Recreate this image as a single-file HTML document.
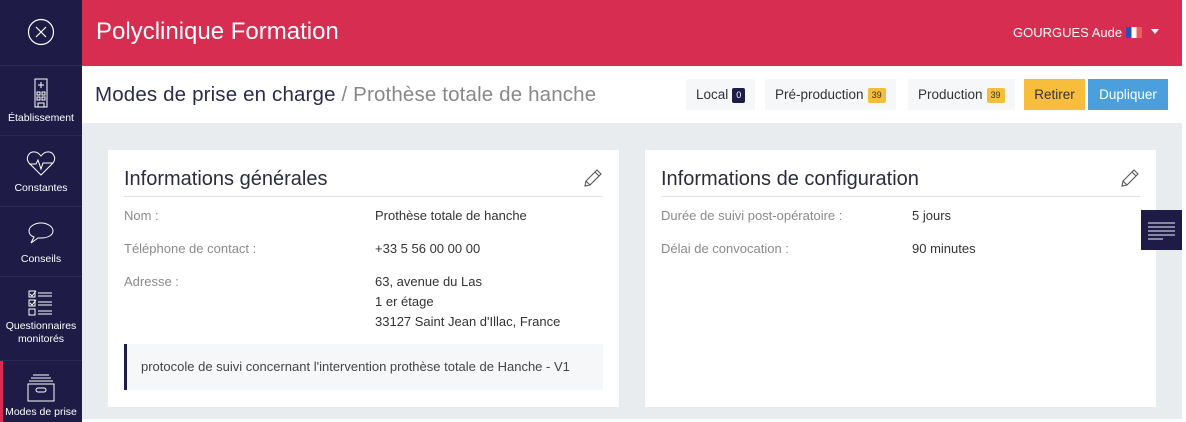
<!DOCTYPE html>
<html><head><meta charset="utf-8"><style>
*{box-sizing:border-box;margin:0;padding:0}
body{width:1186px;height:422px;overflow:hidden;background:#fff;font-family:"Liberation Sans",sans-serif;position:relative}
.side{position:absolute;left:0;top:0;width:82px;height:422px;background:#1e1b46}
.si{position:absolute;left:0;width:82px;border-bottom:1px solid #2e2b5a;color:#fff;font-size:10.5px;text-align:center}
.si svg{display:block;margin:0 auto}
.hdr{position:absolute;left:82px;top:0;width:1100px;height:66px;background:#d62d50;color:#fff}
.sub{position:absolute;left:82px;top:66px;width:1100px;height:57px;background:#fff}
.main{position:absolute;left:82px;top:123px;width:1100px;height:296px;background:#e9ecef}
.card{position:absolute;top:27px;width:511px;height:257px;background:#fff}
.ct{position:absolute;left:16px;top:16px;right:16px;height:31px;border-bottom:1px solid #e3e3e3;font-size:20px;color:#2c2c3c;padding-top:2px}
.lb{position:absolute;font-size:13px;color:#8a8a8a}
.vl{position:absolute;font-size:13px;color:#333;line-height:20px}
.btn{position:absolute;top:79px;height:31px;font-size:13.5px;line-height:31px;padding:0 10px;color:#333;background:#f6f7f9}
.bd{display:inline-block;font-size:9px;line-height:15px;padding:0 4px;border-radius:2px;vertical-align:middle;margin-left:4px}
</style></head><body>
<div class="side">
 <div class="si" style="top:0;height:66px"><svg width="28" height="28" viewBox="0 0 28 28" style="margin-top:18px"><circle cx="14" cy="14" r="12.5" fill="none" stroke="#fff" stroke-width="1.2"/><path d="M9 9L19 19M19 9L9 19" stroke="#fff" stroke-width="1.2"/></svg></div>
 <div class="si" style="top:66px;height:70px"><svg width="16" height="30" viewBox="0 0 16 30" style="margin-top:12px"><rect x="2" y="1" width="12" height="28" fill="none" stroke="#fff"/><path d="M8 4v6M5 7h6M4 14h3v3H4zM9 14h3v3H9zM4 19h3v3H4zM9 19h3v3H9zM5 29v-4h6v4" fill="none" stroke="#fff"/></svg><div style="margin-top:4px">Établissement</div></div>
 <div class="si" style="top:136px;height:71px"><svg width="30" height="26" viewBox="0 0 30 26" style="margin-top:14px"><path d="M15 25L3 13C-1 8 3 1 9 2c3 0 5 3 6 4 1-1 3-4 6-4 6-1 10 6 6 11z" fill="none" stroke="#fff"/><path d="M3 14h7l2-4 3 9 2-6h10" fill="none" stroke="#fff"/></svg><div style="margin-top:6px">Constantes</div></div>
 <div class="si" style="top:207px;height:70px"><svg width="28" height="24" viewBox="0 0 28 24" style="margin-top:14px"><path d="M14 2C7 2 2 6 2 10c0 3 2 5 5 6l-3 6 7-5h3c7 0 12-3 12-7S21 2 14 2z" fill="none" stroke="#fff"/></svg><div style="margin-top:8px">Conseils</div></div>
 <div class="si" style="top:277px;height:84px"><svg width="26" height="26" viewBox="0 0 26 26" style="margin-top:13px"><rect x="1" y="1" width="6" height="6" fill="none" stroke="#fff"/><rect x="1" y="10" width="6" height="6" fill="none" stroke="#fff"/><rect x="1" y="19" width="6" height="6" fill="none" stroke="#fff"/><path d="M2 4l2 2 4-5M2 13l2 2 4-5M10 3h14M10 6h14M10 12h14M10 15h14M10 21h14M10 24h14" fill="none" stroke="#fff"/></svg><div style="margin-top:4px;line-height:13px">Questionnaires<br>monitorés</div></div>
 <div class="si" style="top:361px;height:61px;border-bottom:none"><div style="position:absolute;left:0;top:0;width:3px;height:61px;background:#d62d50"></div><svg width="30" height="28" viewBox="0 0 30 28" style="margin-top:13px"><path d="M7 1h16M5 4h20M3 7h24" stroke="#fff" fill="none"/><rect x="2" y="10" width="26" height="17" fill="none" stroke="#fff"/><rect x="10" y="14" width="10" height="4" rx="2" fill="none" stroke="#fff"/></svg><div style="margin-top:4px">Modes de prise</div></div>
</div>
<div class="hdr"><div style="position:absolute;left:14px;top:18px;font-size:24px">Polyclinique Formation</div>
<div style="position:absolute;left:931px;top:25px;font-size:13px">GOURGUES Aude <span style="display:inline-block;width:16px;height:11px;vertical-align:-1px;background:linear-gradient(90deg,#2b4fb0 33%,#fff 33% 66%,#ef5b5b 66%)"></span> <span style="display:inline-block;margin-left:6px;border:4px solid transparent;border-top:5px solid #fff;vertical-align:-1px"></span></div></div>
<div class="sub"><div style="position:absolute;left:13px;top:17px;font-size:20.5px;color:#2c2b4a;letter-spacing:0.15px">Modes de prise en charge <span style="color:#888">/ Prothèse totale de hanche</span></div></div>
<div class="btn" style="left:686px">Local<span class="bd" style="background:#1e1b46;color:#fff">0</span></div>
<div class="btn" style="left:765px">Pré-production<span class="bd" style="background:#f5bd3c">39</span></div>
<div class="btn" style="left:908px">Production<span class="bd" style="background:#f5bd3c">39</span></div>
<div class="btn" style="left:1024px;width:61px;background:#f7be3e;padding:0;text-align:center">Retirer</div>
<div class="btn" style="left:1088px;width:80px;background:#4a9fdc;color:#fff;padding:0;text-align:center">Dupliquer</div>
<div class="main">
 <div class="card" style="left:26px">
  <div class="ct">Informations générales</div>
  <svg width="22" height="22" viewBox="0 0 22 22" style="position:absolute;left:474px;top:17px"><path d="M3 19l1-5L15 3l4 4L8 18zM4 14l4 4M13 5l4 4" fill="none" stroke="#555" stroke-width="1.1"/></svg>
  <div class="lb" style="left:16px;top:58px">Nom :</div><div class="vl" style="left:267px;top:56px">Prothèse totale de hanche</div>
  <div class="lb" style="left:16px;top:91px">Téléphone de contact :</div><div class="vl" style="left:267px;top:89px">+33 5 56 00 00 00</div>
  <div class="lb" style="left:16px;top:124px">Adresse :</div><div class="vl" style="left:267px;top:122px">63, avenue du Las<br>1 er étage<br>33127 Saint Jean d'Illac, France</div>
  <div style="position:absolute;left:16px;top:194px;width:479px;height:46px;background:#f6f7f9;border-left:3px solid #1e1b46;font-size:13px;color:#444;padding:15px 0 0 14px">protocole de suivi concernant l'intervention prothèse totale de Hanche - V1</div>
 </div>
 <div class="card" style="left:563px">
  <div class="ct">Informations de configuration</div>
  <svg width="22" height="22" viewBox="0 0 22 22" style="position:absolute;left:474px;top:17px"><path d="M3 19l1-5L15 3l4 4L8 18zM4 14l4 4M13 5l4 4" fill="none" stroke="#555" stroke-width="1.1"/></svg>
  <div class="lb" style="left:16px;top:58px">Durée de suivi post-opératoire :</div><div class="vl" style="left:267px;top:56px">5 jours</div>
  <div class="lb" style="left:16px;top:91px">Délai de convocation :</div><div class="vl" style="left:267px;top:89px">90 minutes</div>
 </div>
</div>
<div style="position:absolute;left:1141px;top:210px;width:41px;height:40px;background:#1e1b46"><svg width="27" height="18" viewBox="0 0 27 18" style="position:absolute;left:7px;top:12px"><path d="M0 1h27M0 5h27M0 9h27M0 13h27M0 17h15" stroke="#c8c8d8" stroke-width="1.2"/></svg></div>
</body></html>
